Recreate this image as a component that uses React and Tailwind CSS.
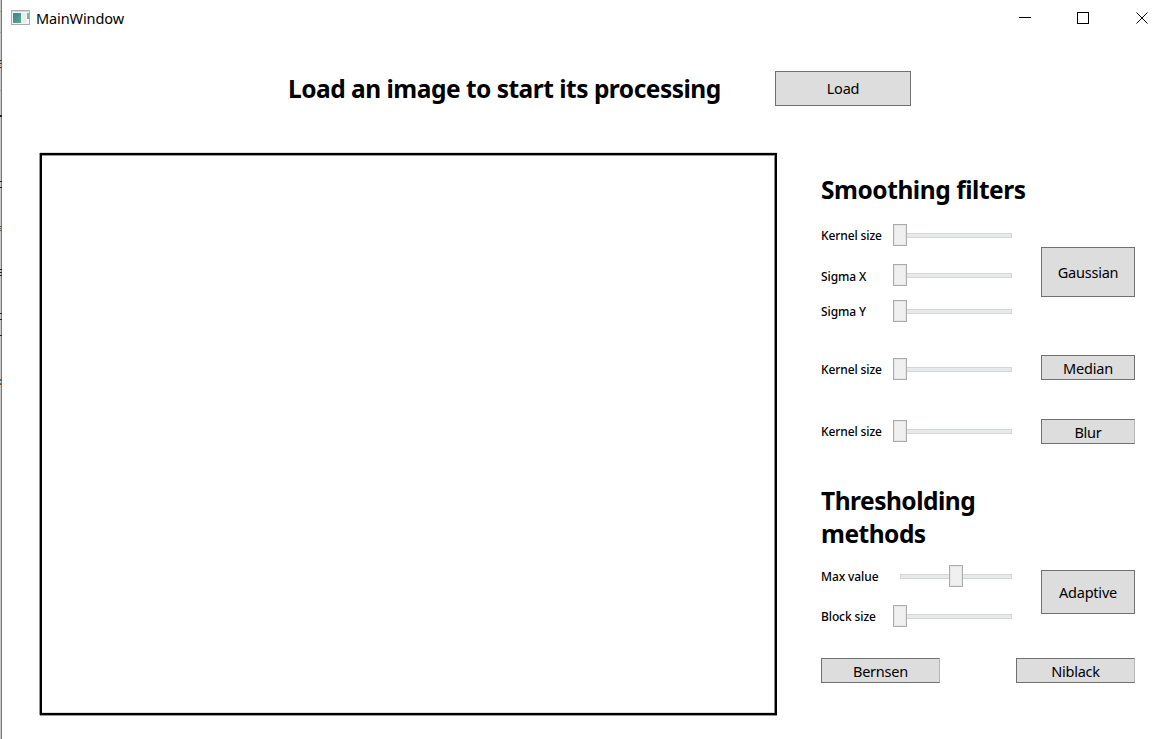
import React from "react";

const font = "font-['Noto_Sans',sans-serif]";
const heading = "text-[24.5px] font-bold";

function Label({ children, className = "" }) {
  return <div className={`w-[72px] shrink-0 whitespace-nowrap text-[12px] font-medium leading-[18px] tracking-[-0.1px] ${className}`}>{children}</div>;
}

function Slider({ middle = false }) {
  return (
    <div className="relative h-[22px] w-[119px] shrink-0">
      <div className="ml-[7px] mt-[9px] h-[5px] w-[112px] border border-[#d6d6d6] bg-[#e7eaea]" />
      <div className={`absolute top-0 h-[22px] w-[14px] border border-[#acacac] bg-[#f0f0f0] shadow-[inset_0_0_0_1px_#e5e5e5] ${middle ? "left-[56px]" : "left-0"}`} />
    </div>
  );
}

function Row({ label, middle, className = "", labelClass = "pt-[2px]" }) {
  return (
    <div className={`flex h-[22px] items-center ${className}`}>
      <Label className={labelClass}>{label}</Label>
      <Slider middle={middle} />
    </div>
  );
}

function Button({ children, className = "", textClass = "" }) {
  return (
    <button className={`flex shrink-0 items-center justify-center border border-[#707070] bg-[#dddddd] text-[14.5px] leading-[20px] tracking-[-0.22px] ${className}`}>
      <span className={textClass}>{children}</span>
    </button>
  );
}

function TitleBar() {
  return (
    <header className="flex h-[37px] items-center pl-[9px]">
      <svg width="19" height="16" viewBox="0 0 19 16" className="mt-[-1px] shrink-0">
        <defs>
          <linearGradient id="pane" x1="0" y1="0" x2="1" y2="1">
            <stop offset="0" stopColor="#3f7f9c" />
            <stop offset="1" stopColor="#5aae7c" />
          </linearGradient>
        </defs>
        <rect x="0.5" y="0.5" width="18" height="14" fill="#f5f5f5" stroke="#a9adb3" />
        <path d="M1 1.500h17" stroke="#d5d8dc" />
        <rect x="2" y="3" width="8" height="10" fill="url(#pane)" />
        <rect x="11" y="3" width="4" height="10" fill="#e9eeee" />
        <rect x="16" y="3" width="2" height="6" fill="#7cb5a0" />
      </svg>
      <span className="ml-[6px] pb-[2px] text-[14.5px] leading-[20px] tracking-[-0.1px]">MainWindow</span>
      <svg width="130" height="14" viewBox="0 0 130 14" className="ml-auto mr-[14px]" fill="none" stroke="#000">
        <path d="M0 5.500h12M58.500 0.500h11v11h-11z" shapeRendering="crispEdges" />
        <path d="M117.500 0.500l11 11M128.500 0.500l-11 11" />
      </svg>
    </header>
  );
}

function WindowEdge() {
  return (
    <svg width="2" height="739" viewBox="0 0 2 739" className="shrink-0" shapeRendering="crispEdges">
      <rect width="1" height="739" fill="#cacaca" />
      <rect x="1" width="1" height="739" fill="#777" />
      <path d="M0 11h1v1H0zM0 32h1v1H0zM0 90h1v1H0z" fill="#aaa" />
      <path d="M0 60h2v1H0zM0 63h2v1H0zM0 67h2v1H0z" fill="#443c38" />
      <path d="M0 61h2v1H0zM0 65h2v1H0z" fill="#c5974f" />
      <path d="M0 115h2v2H0zM0 181h2v1H0zM0 187h2v1H0zM0 269h2v1H0zM0 272h2v1H0zM0 275h2v1H0zM0 313h2v1H0zM0 319h2v1H0zM0 335h2v1H0z" fill="#222" />
      <path d="M0 226h2v1H0zM0 230h2v1H0zM0 379h2v1H0zM0 384h2v1H0z" fill="#80542a" />
      <path d="M0 228h2v1H0zM0 380h2v1H0zM0 383h2v1H0z" fill="#2b7cba" />
    </svg>
  );
}

export default function App() {
  return (
    <div className={`flex h-[739px] w-[1163px] overflow-hidden bg-white text-black ${font}`}>
      <WindowEdge />
      <div className="flex grow flex-col">
        <TitleBar />
        <div className="flex h-[116px] pl-[286px] pt-[34px]">
          <h1 className={`w-[487px] whitespace-nowrap leading-[35px] tracking-[-0.5px] ${heading}`}>Load an image to start its processing</h1>
          <Button className="h-[35px] w-[136px]" textClass="pb-[2px]">Load</Button>
        </div>
        <main className="flex">
          <div className="ml-[38px] h-[562px] w-[737px] shrink-0 border-2 border-black shadow-[-1px_0_0_#999,0_-1px_0_#ddd,0_1px_0_#999,inset_-1px_0_0_#888,inset_0_1px_0_#999,inset_0_-1px_0_#ddd]" />
          <section className="ml-[44px] flex w-[314px] flex-col">
            <h2 className={`mt-[20px] h-[36px] whitespace-nowrap leading-[34px] tracking-[-0.45px] ${heading}`}>Smoothing filters</h2>
            <div className="mt-[15px] flex h-[98px] justify-between">
              <div>
                <Row label="Kernel size" />
                <Row label="Sigma X" className="mt-[18px]" labelClass="pt-[4px]" />
                <Row label="Sigma Y" className="mt-[14px]" />
              </div>
              <Button className="mt-[23px] h-[50px] w-[94px]">Gaussian</Button>
            </div>
            <div className="mt-[33px] flex h-[26px] justify-between">
              <Row label="Kernel size" className="mt-[3px]" />
              <Button className="h-[25px] w-[94px]">Median</Button>
            </div>
            <div className="mt-[38px] flex h-[26px] justify-between">
              <Row label="Kernel size" className="mt-[1px]" />
              <Button className="h-[25px] w-[94px] border-r-[#b5b5b5]">Blur</Button>
            </div>
            <h2 className={`mt-[39px] h-[67px] leading-[33px] tracking-[-0.5px] ${heading}`}>Thresholding<br />methods</h2>
            <div className="mt-[14px] flex h-[62px] justify-between">
              <div>
                <Row label="Max value" middle />
                <Row label="Block size" className="mt-[18px]" />
              </div>
              <Button className="mt-[5px] h-[44px] w-[94px]">Adaptive</Button>
            </div>
            <div className="mt-[31px] flex justify-between">
              <Button className="h-[25px] w-[119px] border-r-[#b5b5b5]">Bernsen</Button>
              <Button className="h-[25px] w-[119px] border-r-[#b5b5b5]">Niblack</Button>
            </div>
          </section>
        </main>
      </div>
    </div>
  );
}
